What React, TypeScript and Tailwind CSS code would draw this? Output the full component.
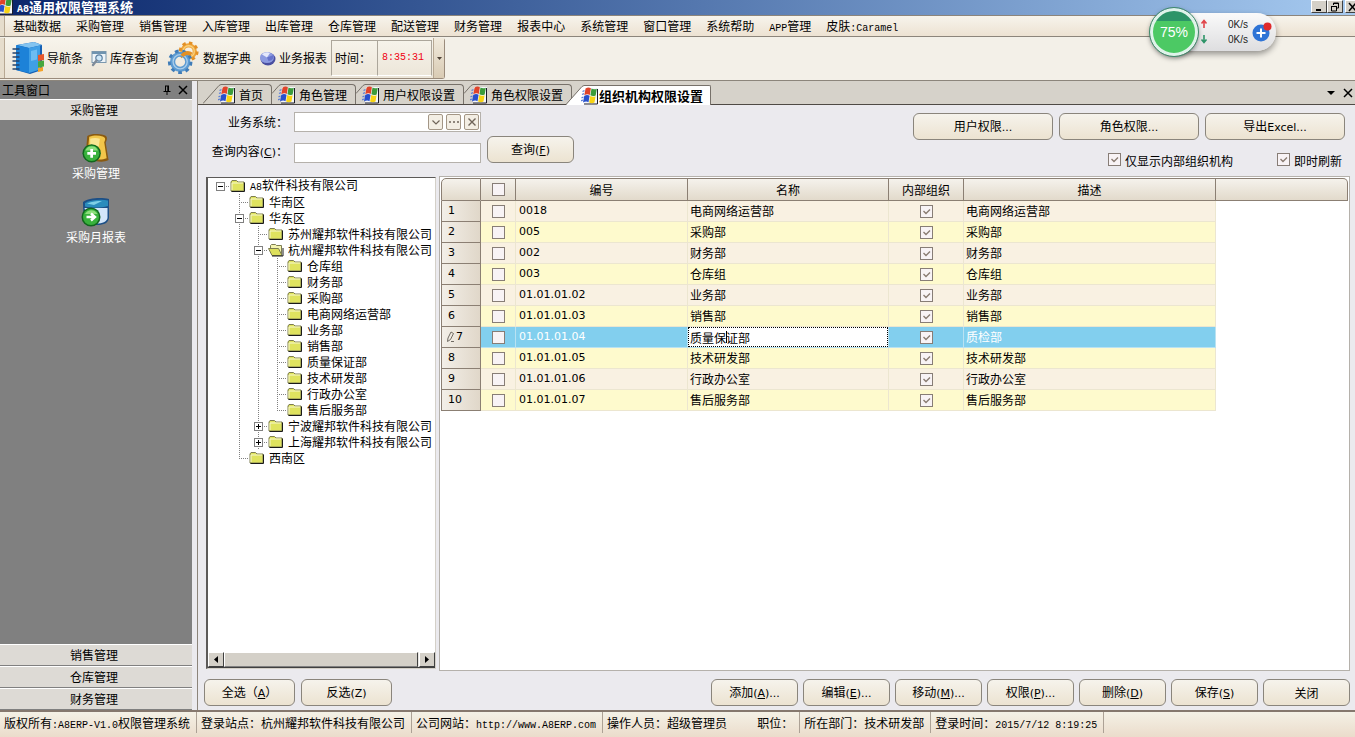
import { useId, useState, type ReactNode } from 'react';

const MENU_ITEMS = [
  '基础数据', '采购管理', '销售管理', '入库管理', '出库管理', '仓库管理', '配送管理',
  '财务管理', '报表中心', '系统管理', '窗口管理', '系统帮助', 'APP管理', '皮肤:Caramel',
];

const TABS = ['首页', '角色管理', '用户权限设置', '角色权限设置', '组织机构权限设置'];

const COMMANDS = [
  '添加(&A)...', '编辑(&E)...', '移动(&M)...', '权限(&P)...', '删除(&D)', '保存(&S)', '关闭',
];

type Guide = 'none' | 'line' | 'tee' | 'end' | 'root' | 'minus' | 'plus';

interface TreeRow {
  guides: Guide[];
  name: string;
  open?: boolean;
}

const LEAVES = ['仓库组', '财务部', '采购部', '电商网络运营部', '业务部', '销售部', '质量保证部', '技术研发部', '行政办公室'];

const TREE: TreeRow[] = [
  { guides: ['root'], name: 'A8软件科技有限公司' },
  { guides: ['none', 'tee'], name: '华南区' },
  { guides: ['none', 'minus'], name: '华东区' },
  { guides: ['none', 'line', 'tee'], name: '苏州耀邦软件科技有限公司' },
  { guides: ['none', 'line', 'minus'], name: '杭州耀邦软件科技有限公司', open: true },
  ...LEAVES.map((name): TreeRow => ({ guides: ['none', 'line', 'line', 'tee'], name })),
  { guides: ['none', 'line', 'line', 'end'], name: '售后服务部' },
  { guides: ['none', 'line', 'plus'], name: '宁波耀邦软件科技有限公司' },
  { guides: ['none', 'line', 'plus'], name: '上海耀邦软件科技有限公司' },
  { guides: ['none', 'end'], name: '西南区' },
];

const ROWS = [
  { code: '0018', name: '电商网络运营部', note: '电商网络运营部' },
  { code: '005', name: '采购部', note: '采购部' },
  { code: '002', name: '财务部', note: '财务部' },
  { code: '003', name: '仓库组', note: '仓库组' },
  { code: '01.01.01.02', name: '业务部', note: '业务部' },
  { code: '01.01.01.03', name: '销售部', note: '销售部' },
  { code: '01.01.01.04', name: '质量保证部', note: '质检部' },
  { code: '01.01.01.05', name: '技术研发部', note: '技术研发部' },
  { code: '01.01.01.06', name: '行政办公室', note: '行政办公室' },
  { code: '01.01.01.07', name: '售后服务部', note: '售后服务部' },
];

const EDITING = 6;

// Latin runs get their own face; "&X" underlines X as the accelerator key.
function T({ text, mono = false }: { text: string; mono?: boolean }) {
  return (
    <>
      {text.split(/([\x20-\x7e]+)/).map((part, i) => {
        if (i % 2 === 0) return part;
        const [before, after] = part.split('&');
        return (
          <span
            key={i}
            className={mono
              ? "font-['Liberation_Mono',monospace] text-[10px] whitespace-pre"
              : "font-['DejaVu_Sans',sans-serif] text-[11px] whitespace-pre"}
          >
            {before}
            {after && <u>{after[0]}</u>}
            {after?.slice(1)}
          </span>
        );
      })}
    </>
  );
}

function FlagIcon({ className = '' }: { className?: string }) {
  return (
    <svg viewBox="0 0 18 18" className={`h-[18px] w-[18px] shrink-0 ${className}`}>
      <path d="M4 1h13v16H3z" fill="#f4f6fb" />
      <path d="M16.5 2v15H3" fill="none" stroke="#1c1c28" />
      <path d="M4.600 1.600C6.400.2 8.200.2 9.900 1.200L8.800 7.900C7.200 7 5.200 7.100 3.300 8.300z" fill="#e0442a" />
      <path d="M10.500 1.600c1.700 1 3.300 1 5.300.1L14.700 8.400c-1.900.9-3.600.8-5.300-.1z" fill="#3c9c3a" />
      <path d="M3.200 9C5 7.900 6.900 7.800 8.600 8.800L7.500 15.200C5.800 14.300 4 14.400 2 15.600z" fill="#2850cc" />
      <path d="M9.200 9.100c1.800.9 3.500 1 5.400.1L13.500 15.600c-1.900.9-3.700.8-5.400-.1z" fill="#f8d414" />
      <path d="M1.500 4.500l2-.8M1 7.500l2-.8M.5 10.800l2-.8M0 13.800l2-.8" stroke="#5b7fd6" strokeWidth="1.300" />
    </svg>
  );
}

function BookIcon() {
  return (
    <svg viewBox="0 0 32 34" className="h-[34px] w-8">
      <path d="M5 4L22 1l8 3v25l-12 4L4 29z" fill="#1460b4" />
      <path d="M5 4L22 1l8 3-13 3z" fill="#83c4f0" />
      <path d="M4 4l13 3v25L4 29z" fill="#1d82d8" />
      <path d="M17 7l11-2.500v24L17 32z" fill="#3f9fe6" />
      <path d="M19 10l6-1.500v10L19 20z" fill="#6dbcf2" />
      <path d="M26 14l6-1v6l-6 1z" fill="#e8572a" />
      <path d="M26 20.500l6-1v6l-6 1z" fill="#46a83d" />
      <path d="M26 27l5-1v4l-5 1z" fill="#f3a228" />
      <path d="M1 8h6M1 12h6M1 16h6M1 20h6M1 24h6M1 28h6" stroke="#24446e" strokeWidth="1.400" strokeLinecap="round" />
    </svg>
  );
}

function FindIcon() {
  return (
    <svg viewBox="0 0 16 17" className="h-[17px] w-4">
      <rect x="1" y="1.500" width="14" height="11" fill="#eef4f8" stroke="#7b98ae" />
      <path d="M1 2h14v2H1z" fill="#6f94b0" />
      <circle cx="8" cy="8" r="3.200" fill="#cfe8f8" stroke="#5a7fa0" strokeWidth="1.200" />
      <path d="M5.500 10.500L2 15" stroke="#7f8c9a" strokeWidth="2.400" strokeLinecap="round" />
    </svg>
  );
}

function GearsIcon() {
  return (
    <svg viewBox="-2 -1 36 36" className="h-[34px] w-[34px]">
      <circle cx="22" cy="10" r="6.500" fill="none" stroke="#f0a63c" strokeWidth="4.500" />
      <circle cx="22" cy="10" r="9" fill="none" stroke="#e39025" strokeWidth="3" strokeDasharray="3.600 3.468" />
      <circle cx="22" cy="10" r="6" fill="none" stroke="#f8d27e" strokeWidth="1.400" />
      <circle cx="13" cy="21" r="8" fill="none" stroke="#5c9bd2" strokeWidth="5.500" />
      <circle cx="13" cy="21" r="11.500" fill="none" stroke="#3f7cb8" strokeWidth="3" strokeDasharray="4 4.028" />
      <circle cx="13" cy="21" r="7.500" fill="none" stroke="#a9cdea" strokeWidth="1.400" />
      <path d="M15 15a7 7 0 0110-2" fill="none" stroke="#e39025" strokeWidth="4" />
    </svg>
  );
}

function GlobeIcon() {
  return (
    <svg viewBox="0 0 17 16" className="h-4 w-[17px]">
      <ellipse cx="9" cy="9" rx="7.500" ry="6.500" fill="#4a4fa0" />
      <ellipse cx="8" cy="7.500" rx="7" ry="5.500" fill="#8c9ae0" />
      <path d="M3 4.500C5 2 9 1.500 11 3L8 7.500z" fill="#e4e8fb" />
      <path d="M8 7.500L14.500 5c1 3-2 6-5 6z" fill="#6673cc" />
    </svg>
  );
}

function PurchaseIcon() {
  return (
    <svg viewBox="0 0 30 31" className="h-[30px] w-[30px]">
      <path d="M6 3c5-3 12-2 17-1 4 1 4 4 2 8l3 18c-4 2-8 2-14 1L4 26z" fill="#8a5a10" />
      <path d="M8 4c5-2 10-1.500 14-.5 3 1 3 3 1.500 6L26 26c-4 1.500-7 1.500-12 1L6 24z" fill="#f2c64a" />
      <path d="M9 6c3-1 7-1 10 0l-1 8-9 2z" fill="#fbe692" />
      <circle cx="10.500" cy="21" r="9.500" fill="#11661d" />
      <circle cx="10.500" cy="21" r="8" fill="#39b23c" />
      <path d="M4 18a7 7 0 0113 0z" fill="#8ddf7c" />
      <path d="M10.500 16.500v9M6 21h9" stroke="#fff" strokeWidth="2.800" />
    </svg>
  );
}

function ReportIcon() {
  return (
    <svg viewBox="0 0 30 30" className="h-[30px] w-[30px]">
      <path d="M2 5c5-4 18-5 26-3v19c-1 5-5 7-12 7H6C3 26 2 14 2 5z" fill="#1c4f86" />
      <path d="M3.500 11h23v10c-1 4-5 5.500-11 5.500H8z" fill="#d3e6fa" />
      <path d="M4 6c6-3 16-4 23-2.500V9C20 11 10 11 4 9.500z" fill="#2a8cbc" />
      <path d="M6 6.500c5-2 10-2.500 15-2.500l-8 4z" fill="#7fd0e6" />
      <circle cx="10" cy="20" r="9.500" fill="#11661d" />
      <circle cx="10" cy="20" r="8" fill="#39b23c" />
      <path d="M4 17a7 7 0 0112.500 0z" fill="#8ddf7c" />
      <path d="M5.500 20h7M10 16.500l4 3.500-4 3.500" fill="none" stroke="#fff" strokeWidth="2.400" />
    </svg>
  );
}

function FolderIcon({ open = false }: { open?: boolean }) {
  return (
    <svg viewBox="0 0 16 14" className="h-[14px] w-4 shrink-0">
      {open ? (
        <>
          <path d="M2.500 6V2.500l1-1h4l1 1h5v10" fill="#f4f4b0" stroke="#7d7d52" />
          <path d="M.5 5.500h10l3.500 7H4z" fill="#dde05c" stroke="#7d7d52" />
          <path d="M4 13h11V5" fill="none" stroke="#1a1a1a" />
        </>
      ) : (
        <>
          <path d="M1 12V3l1-1.500h4.500L8 3h6v9z" fill="#dfe35f" stroke="#7d7d52" />
          <path d="M2 11V4h11" fill="none" stroke="#f8f8cf" />
          <path d="M1.500 12.500h13V3.500" fill="none" stroke="#1a1a1a" />
        </>
      )}
    </svg>
  );
}

function TreeGuide({ kind }: { kind: Guide }) {
  const box = kind === 'root' || kind === 'minus' || kind === 'plus';
  const down = kind === 'line' || kind === 'tee' || kind === 'minus' || kind === 'plus';
  return (
    <svg viewBox="0 0 19 16" className="h-4 w-[19px] shrink-0">
      <g stroke="#808080" strokeDasharray="1 1">
        {(down || kind === 'end') && <path d="M9.500 0v8" />}
        {down && <path d="M9.500 8v8" />}
        {kind !== 'none' && kind !== 'line' && <path d="M9 8.500h10" />}
      </g>
      {box && <rect x="5.500" y="4.500" width="8" height="8" fill="#fff" stroke="#808080" />}
      {box && <path d="M7 8.500h5" stroke="#000" />}
      {kind === 'plus' && <path d="M9.500 6v5" stroke="#000" />}
    </svg>
  );
}

function Check({ id, label, checked = false }: { id?: string; label?: string; checked?: boolean }) {
  return (
    <span className="relative mx-auto block h-[13px] w-[13px] shrink-0">
      <input
        id={id}
        type="checkbox"
        aria-label={label}
        defaultChecked={checked}
        className="peer block h-[13px] w-[13px] appearance-none border border-[#877d76] bg-[#f8f3f5]"
      />
      <svg viewBox="0 0 13 13" className="pointer-events-none absolute inset-0 hidden peer-checked:block">
        <path d="M3.500 6l2.500 2.500 4-4" fill="none" stroke="#8a7c72" strokeWidth="1.400" />
      </svg>
    </span>
  );
}

function CaramelButton({ text, className }: { text: string; className: string }) {
  return (
    <button
      type="button"
      className={`h-[27px] rounded-[6px] border border-[#8a857c] bg-linear-to-b from-[#f6f3ec] to-[#ece3d1] text-center leading-5 hover:to-[#f6d9a8] ${className}`}
    >
      <T text={text} />
    </button>
  );
}

function TitleBar() {
  const button = 'flex h-[13px] w-4 items-center justify-center border border-t-white border-l-white border-r-[#404040] border-b-[#404040] bg-[#d4d0c8]';
  return (
    <header className="flex h-[15px] items-start justify-between bg-linear-to-r from-[#0a246a] to-[#a6caf0]">
      <div className="flex items-center">
        <FlagIcon className="-ml-1 -mt-1" />
        <h1 className="ml-[3px] text-[13px] leading-[13px] font-bold text-white">
          <T text="A8通用权限管理系统" mono />
        </h1>
      </div>
      <div className="-mr-1.5 flex">
        <button type="button" aria-label="最小化" className={button}>
          <svg viewBox="0 0 10 10" className="h-2.5 w-2.5"><path d="M2 8h5" stroke="#000" strokeWidth="2" /></svg>
        </button>
        <button type="button" aria-label="还原" className={button}>
          <svg viewBox="0 0 10 10" className="h-2.5 w-2.5">
            <path d="M3.500 3V1h5v5H7M3 1.500h6M1.500 4v5h5V4M1 4.500h6" fill="none" stroke="#000" />
          </svg>
        </button>
        <button type="button" aria-label="关闭窗口" className={`ml-0.5 ${button}`}>
          <svg viewBox="0 0 10 10" className="h-2.5 w-2.5"><path d="M1 1l7 8M8 1L1 9" stroke="#000" strokeWidth="1.500" /></svg>
        </button>
      </div>
    </header>
  );
}

function ToolButton({ icon, text }: { icon: ReactNode; text: string }) {
  return (
    <button type="button" className="flex items-center gap-[3px]">
      {icon}
      <span>{text}</span>
    </button>
  );
}

function ToolBar() {
  return (
    <div className="h-11 shrink-0 border-b border-[#8c857b] bg-[#f3f0e8] pt-px">
      <div className="flex h-[41px] w-max items-stretch rounded-r-[3px] border-r border-b border-[#9a8b7b] bg-linear-to-b from-[#f7f4ec] to-[#ece5d8]">
        <div className="w-[5px] border-r border-[#b7a893] bg-[#e6ddcc]" />
        <div className="mr-1 ml-[7px] flex items-center gap-2">
          <ToolButton icon={<BookIcon />} text="导航条" />
          <ToolButton icon={<FindIcon />} text="库存查询" />
          <ToolButton icon={<GearsIcon />} text="数据字典" />
          <ToolButton icon={<GlobeIcon />} text="业务报表" />
        </div>
        <div className="my-0.5 flex w-[47px] items-center border border-[#aca69b] border-b-white pl-[3px]">时间：</div>
        <div className="my-0.5 flex w-[54px] items-center border border-l-0 border-[#aca69b] border-b-white pl-1 text-[#f00010]">
          <T text="8:35:31" mono />
        </div>
        <button type="button" aria-label="工具栏选项" className="ml-px flex w-[11px] items-center justify-center border-l border-[#b7a893] bg-linear-to-b from-[#f1eadc] to-[#d9cbb4]">
          <svg viewBox="0 0 5 3" className="h-[3px] w-[5px]"><path d="M0 0h5L2.500 3z" fill="#4d4236" /></svg>
        </button>
      </div>
    </div>
  );
}

function SpeedBall() {
  return (
    <div className="absolute top-2 right-[79px] flex items-center">
      <div className="z-10 flex h-12 w-12 items-center justify-center rounded-full border-[3px] border-[#dff3ea] bg-linear-to-b from-[#2d9468] from-25% to-[#4cc964] to-25% font-['Liberation_Sans',sans-serif] text-sm text-white shadow-[0_2px_5px_rgba(0,0,0,0.5)] outline outline-[#3f8a6c]">
        75%
      </div>
      <div className="-ml-6 flex h-[38px] w-[102px] items-center rounded-r-full bg-linear-to-b from-[#fafafa] to-[#dedee0] pr-1 pl-[26px] shadow-[0_3px_6px_rgba(0,0,0,0.4)]">
        <svg viewBox="0 0 8 26" className="h-[26px] w-2">
          <path d="M4 9V2M1.500 4.500L4 1.500l2.500 3" fill="none" stroke="#e0454a" strokeWidth="1.600" />
          <path d="M4 16v7M1.500 20.500l2.500 3 2.500-3" fill="none" stroke="#2d9468" strokeWidth="1.600" />
        </svg>
        <div className="flex-1 text-right font-['Liberation_Sans',sans-serif] text-[10px] leading-[15px] text-[#222]">
          <div>0K/s</div>
          <div>0K/s</div>
        </div>
        <svg viewBox="0 0 20 20" className="ml-1 h-5 w-5">
          <circle cx="9" cy="11" r="8.500" fill="#2f74d6" />
          <path d="M9 6.500v9M4.500 11h9" stroke="#fff" strokeWidth="2" />
          <circle cx="15.500" cy="4.500" r="4" fill="#e02a2a" />
        </svg>
      </div>
    </div>
  );
}

function SidePanel() {
  const bar = 'h-[22px] w-full shrink-0 border-t border-b border-t-white border-b-[#808080] bg-[#dddad5] pr-1 text-center leading-5';
  const link = 'flex flex-col items-center gap-0.5 leading-4 text-white';
  return (
    <aside className="flex w-48 shrink-0 flex-col bg-[#808080]">
      <div className="flex h-[18px] shrink-0 items-center pr-1 pl-0.5">
        <span className="flex-1 leading-[18px]">工具窗口</span>
        <button type="button" aria-label="自动隐藏" className="mr-1.5">
          <svg viewBox="0 0 10 10" className="h-2.5 w-2.5">
            <path d="M3 1h4M3.500 1v5M6.500 1v5M5.800 1v5M1.500 6.500h7M5 6.500V10" fill="none" stroke="#000" />
          </svg>
        </button>
        <button type="button" aria-label="关闭工具窗口">
          <svg viewBox="0 0 10 10" className="h-2.5 w-2.5"><path d="M1 1l8 8M9 1L1 9" stroke="#000" strokeWidth="1.500" /></svg>
        </button>
      </div>
      <button type="button" className={bar}>采购管理</button>
      <nav className="flex flex-1 flex-col items-center gap-4 pt-3">
        <a href="#purchase" className={link}><PurchaseIcon />采购管理</a>
        <a href="#report" className={link}><ReportIcon />采购月报表</a>
      </nav>
      <button type="button" className={bar}>销售管理</button>
      <button type="button" className={bar}>仓库管理</button>
      <button type="button" className={bar}>财务管理</button>
    </aside>
  );
}

function TabStrip() {
  const [active, setActive] = useState(4);
  return (
    <div className="flex h-6 shrink-0 items-end border-b border-[#4f4a45] bg-[#d6d2ca] pl-[5px]">
      {TABS.map((tab, i) => (
        <button
          key={tab}
          type="button"
          onClick={() => setActive(i)}
          className={`relative flex h-5 shrink-0 items-stretch ${i === active ? '-mb-px -ml-1.5 font-bold text-[13px]' : ''}`}
        >
          {i === 0 || i === active ? (
            <svg viewBox="0 0 18 20" className="h-5 w-[18px]">
              <path d="M0 20L16 1.500 18 .5V20z" fill={i === active ? '#fff' : '#d6d2ca'} />
              <path d="M0 19.500L16 1.500 18 .5" fill="none" stroke="#77716a" />
            </svg>
          ) : (
            <svg viewBox="0 0 9 20" className="h-5 w-[9px]">
              <path d="M0 9.500L7 1.500 9 .5" fill="none" stroke="#77716a" />
            </svg>
          )}
          <span
            className={`flex items-center border-t border-r border-[#77716a] ${
              i === active ? 'rounded-tr-[2px] bg-white pr-[7px]' : 'gap-[3px] rounded-tr-[4px] pr-2'
            }`}
          >
            <FlagIcon className="-ml-[3px]" />
            {tab}
          </span>
        </button>
      ))}
      <div className="ml-auto flex items-center gap-2 self-center pr-0.5">
        <button type="button" aria-label="窗口列表">
          <svg viewBox="0 0 8 4" className="h-1 w-2"><path d="M0 0h8L4 4z" /></svg>
        </button>
        <button type="button" aria-label="关闭标签页">
          <svg viewBox="0 0 10 10" className="h-2.5 w-2.5"><path d="M1 1l8 8M9 1L1 9" stroke="#000" strokeWidth="1.500" /></svg>
        </button>
      </div>
    </div>
  );
}

function Filters() {
  const id = useId();
  const small = 'flex h-4 w-[15px] items-center justify-center rounded-[2px] border border-[#a39686] bg-[#f3eee4]';
  return (
    <div className="flex h-[71px] shrink-0 justify-between pr-[5px]">
      <form className="mt-[7px] grid h-[51px] grid-cols-[88px_187px_93px]" onSubmit={(e) => e.preventDefault()}>
        <label htmlFor={`${id}-sys`} className="pr-1.5 text-right leading-5">业务系统：</label>
        <div className="flex h-5 items-center gap-[3px] border border-[#b5b1ab] bg-white pr-px">
          <input id={`${id}-sys`} type="text" className="h-full min-w-0 flex-1 px-1 outline-none" />
          <button type="button" aria-label="展开" className={small}>
            <svg viewBox="0 0 8 5" className="h-[5px] w-2"><path d="M.5.5L4 4 7.500.5" fill="none" stroke="#6f6459" strokeWidth="1.200" /></svg>
          </button>
          <button type="button" aria-label="浏览" className={small}>
            <svg viewBox="0 0 10 2" className="h-0.5 w-2.5"><path d="M0 1h2M4 1h2M8 1h2" stroke="#6f6459" strokeWidth="1.600" /></svg>
          </button>
          <button type="button" aria-label="清除" className={small}>
            <svg viewBox="0 0 8 8" className="h-2 w-2"><path d="M.5.5l7 7M7.500.5l-7 7" stroke="#6f6459" strokeWidth="1.400" /></svg>
          </button>
        </div>
        <div className="row-span-2 flex items-end justify-end">
          <CaramelButton text="查询(&F)" className="w-[87px]" />
        </div>
        <label htmlFor={`${id}-text`} className="self-end pr-1.5 text-right leading-5"><T text="查询内容(&C)：" /></label>
        <input id={`${id}-text`} type="text" className="h-5 self-end border border-[#b5b1ab] bg-white px-1 outline-none" />
      </form>
      <div className="pt-2">
        <div className="flex gap-1.5">
          <CaramelButton text="用户权限..." className="w-[140px]" />
          <CaramelButton text="角色权限..." className="w-[140px]" />
          <CaramelButton text="导出Excel..." className="w-[140px]" />
        </div>
        <div className="mt-[13px] flex justify-end gap-11 pr-[3px]">
          <span className="flex gap-1">
            <Check id={`${id}-inner`} checked />
            <label htmlFor={`${id}-inner`} className="leading-4">仅显示内部组织机构</label>
          </span>
          <span className="flex gap-1">
            <Check id={`${id}-live`} checked />
            <label htmlFor={`${id}-live`} className="leading-4">即时刷新</label>
          </span>
        </div>
      </div>
    </div>
  );
}

function OrgTree() {
  const arrow = 'flex w-4 items-center justify-center border border-t-white border-l-white border-r-[#404040] border-b-[#404040] bg-[#d4d0c8]';
  return (
    <section className="mt-px mb-0.5 flex w-[230px] shrink-0 flex-col border border-l-2 border-t-[#5c5a58] border-l-[#5c5a58] border-r-[#d4d0c8] border-b-[#d4d0c8] bg-white">
      <ul className="flex-1 pl-[3px] whitespace-nowrap">
        {TREE.map((row) => (
          <li key={row.name} className="flex h-4 items-center">
            {row.guides.map((g, i) => <TreeGuide key={i} kind={g} />)}
            <FolderIcon open={row.open} />
            <span className="ml-1 leading-4"><T text={row.name} mono /></span>
          </li>
        ))}
      </ul>
      <div className="flex h-4 border-b border-[#404040] bg-[#e9e7e2]">
        <button type="button" aria-label="向左滚动" className={arrow}>
          <svg viewBox="0 0 4 7" className="h-[7px] w-1"><path d="M4 0v7L0 3.500z" /></svg>
        </button>
        <div className="mr-px flex-1 border border-t-white border-l-white border-r-[#404040] border-b-[#808080] bg-[#d4d0c8]" />
        <button type="button" aria-label="向右滚动" className={arrow}>
          <svg viewBox="0 0 4 7" className="h-[7px] w-1"><path d="M0 0v7l4-3.500z" /></svg>
        </button>
      </div>
    </section>
  );
}

function OrgGrid() {
  const head = 'h-[23px] border-r border-b border-[#8b7f73] bg-linear-to-b from-[#f5f2ec] to-[#e2dacb] p-0 text-center font-normal leading-4';
  return (
    <section className="ml-[3px] min-w-0 flex-1 border border-[#b5b1ab] bg-white p-px">
      <table className="w-full table-fixed border-separate border-spacing-0">
        <colgroup>
          <col className="w-10" />
          <col className="w-[35px]" />
          <col className="w-[172px]" />
          <col className="w-[201px]" />
          <col className="w-[75px]" />
          <col className="w-[252px]" />
          <col />
        </colgroup>
        <thead>
          <tr>
            <th className={`rounded-tl-[5px] border-t border-l ${head}`} aria-label="行号" />
            <th className={`border-t ${head}`}><Check label="全选" /></th>
            <th className={`border-t ${head}`}>编号</th>
            <th className={`border-t ${head}`}>名称</th>
            <th className={`border-t ${head}`}>内部组织</th>
            <th className={`border-t ${head}`}>描述</th>
            <th className={`rounded-tr-[5px] border-t ${head}`} aria-label="空列" />
          </tr>
        </thead>
        <tbody>
          {ROWS.map((row, i) => {
            const editing = i === EDITING;
            const tone = editing
              ? 'bg-[#82cfee] border-[#b9e2f2] text-white'
              : i % 2 ? 'bg-[#fefacd] border-[#ece6d0]' : 'bg-[#f9f1e2] border-[#ece6d0]';
            const cell = `h-[21px] border-r border-b p-0 leading-4 ${tone}`;
            return (
              <tr key={row.code}>
                <th className="h-[21px] border-r border-b border-l border-[#8b7f73] bg-linear-to-r from-[#f3efe8] to-[#e0d7c9] p-0 text-left font-normal leading-4">
                  <span className={`flex items-center ${editing ? 'pl-1' : 'pl-1.5'}`}>
                    {editing && (
                      <svg viewBox="0 0 9 12" className="mr-px h-3 w-[9px]">
                        <path d="M2 7l3-6 2.500 1.500-3 6L1.500 10.500zM5 10.500h3" fill="none" stroke="#6f6a62" />
                      </svg>
                    )}
                    <T text={`${i + 1}`} />
                  </span>
                </th>
                <td className={cell}><Check label={`选择 ${row.code}`} /></td>
                <td className={cell}><div className="flex pl-[3px]"><T text={row.code} /></div></td>
                <td className={cell}>
                  {editing ? (
                    <div className="relative">
                      <input
                        type="text"
                        aria-label="名称"
                        defaultValue={row.name}
                        className="block h-5 w-full border border-dotted border-black bg-white pl-px text-black outline-none"
                      />
                      <span className="absolute top-1 left-[38px] h-3 w-px bg-black" />
                    </div>
                  ) : (
                    <div className="pl-0.5">{row.name}</div>
                  )}
                </td>
                <td className={cell}><Check label={`${row.name}内部组织`} checked /></td>
                <td className={cell}><div className="pl-0.5">{row.note}</div></td>
                <td />
              </tr>
            );
          })}
        </tbody>
      </table>
    </section>
  );
}

function StatusBar() {
  const cell = 'h-[21px] border-r border-[#aca195] pr-1.5 pl-1';
  return (
    <footer className="flex h-[27px] shrink-0 items-start border-t-2 border-[#85786e] bg-linear-to-b from-[#f4f1e6] to-[#ebdccb] leading-[21px] whitespace-nowrap">
      <div className={cell}><T text="版权所有:A8ERP-V1.0权限管理系统" mono /></div>
      <div className={cell}>登录站点：杭州耀邦软件科技有限公司</div>
      <div className={cell}><T text="公司网站：http://www.A8ERP.com" mono /></div>
      <div className={`flex gap-[30px] ${cell}`}>
        <span>操作人员：超级管理员</span>
        <span>职位：</span>
      </div>
      <div className={cell}>所在部门：技术研发部</div>
      <div className={cell}><T text="登录时间：2015/7/12 8:19:25" mono /></div>
    </footer>
  );
}

export default function App() {
  return (
    <div className="relative flex h-screen flex-col overflow-hidden bg-[#ebeaee] font-['Noto_Sans_CJK_SC',sans-serif] text-xs text-black">
      <TitleBar />
      <nav className="flex h-[22px] shrink-0 items-stretch border-t border-b border-[#8c857b] bg-linear-to-b from-[#f7f4ec] to-[#ede2d2]">
        <div className="mr-2 w-[5px] border-r border-[#b7a893] bg-[#e6ddcc]" />
        <div className="flex gap-[15px] leading-5">
          {MENU_ITEMS.map((item) => (
            <button key={item} type="button" className="whitespace-nowrap"><T text={item} mono /></button>
          ))}
        </div>
      </nav>
      <ToolBar />
      <div className="flex min-h-0 flex-1">
        <SidePanel />
        <main className="ml-[5px] flex min-w-0 flex-1 flex-col border-l border-[#8c857b]">
          <TabStrip />
          <div className="flex min-h-0 flex-1 flex-col pr-[5px] pl-2">
            <Filters />
            <div className="flex min-h-0 flex-1">
              <OrgTree />
              <OrgGrid />
            </div>
            <div className="-ml-0.5 flex h-[39px] shrink-0 items-start pt-2">
              <div className="flex gap-1.5">
                <CaramelButton text="全选（&A）" className="w-[91px]" />
                <CaramelButton text="反选(Z)" className="w-[91px]" />
              </div>
              <div className="ml-auto flex gap-[5px]">
                {COMMANDS.map((text) => <CaramelButton key={text} text={text} className="w-[87px]" />)}
              </div>
            </div>
          </div>
        </main>
      </div>
      <StatusBar />
      <SpeedBall />
    </div>
  );
}
